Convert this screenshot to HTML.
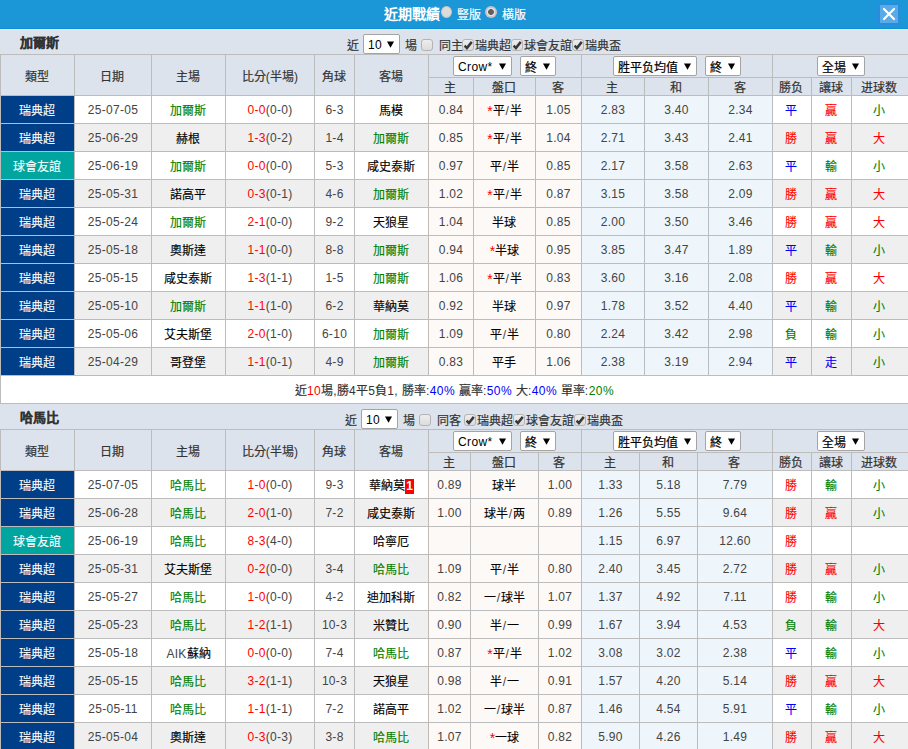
<!DOCTYPE html>
<html lang="zh-TW"><head><meta charset="utf-8"><style>
html,body{margin:0;padding:0;}
body{width:908px;height:749px;overflow:hidden;position:relative;background:#fff;font-family:"Liberation Sans", sans-serif;font-size:12px;color:#333;}
body>div,body>svg{position:absolute;}
.st{position:absolute;left:4px;top:1px;line-height:19px;white-space:pre;letter-spacing:.4px}
.st i{letter-spacing:0;position:relative;top:1px}
b{font-weight:normal;}
.t{position:absolute;left:0;right:0;top:0;bottom:0;display:flex;align-items:center;justify-content:center;white-space:pre;letter-spacing:.3px}
.s{position:absolute;left:0;right:0;top:0;bottom:0;display:flex;align-items:center;justify-content:center;white-space:pre;}
i{font-style:normal;letter-spacing:0;-webkit-text-stroke:.2px}
.bd i{color:#000;-webkit-text-stroke:.12px}
.bd span[style] i{color:inherit}
.w i{-webkit-text-stroke:.1px}
.t i{position:relative;top:0}
.cj i{left:-1px}
s{text-decoration:none;padding:0 .6px}
u{text-decoration:none;font-size:14px;line-height:10px;position:relative;top:1px}
.sum{letter-spacing:.45px}
.rc{background:#f00;color:#fff;font-weight:bold;padding:0 1px 1px;letter-spacing:0}
</style></head><body>
<div style="left:0px;top:0px;width:908px;height:28px;background:#1b96d6"></div><div style="left:0px;top:28px;width:908px;height:1px;background:#0b8ed2"></div><div style="left:0px;top:29px;width:908px;height:1px;background:#e7e9ee"></div><div style="left:384px;top:5px;width:60px;height:18px;color:#fff;font-weight:bold;font-size:14px;line-height:18px;white-space:nowrap;-webkit-text-stroke:0"><i style="-webkit-text-stroke:0">近期戰績</i></div><div style="left:441px;top:6px;width:11px;height:12px;border-radius:50%;background:#dcdcdc;box-sizing:border-box;border:1px solid #c4c4c4"></div><div style="left:457px;top:7px;width:30px;height:16px;color:#fff;font-size:12px;line-height:16px;white-space:nowrap"><i>豎版</i></div><div style="left:485px;top:6px;width:12px;height:12px;border-radius:50%;background:radial-gradient(circle at 50% 50%, #606060 0, #606060 2.6px, #e4e4e4 3.2px, #e4e4e4 4px, #c4c4c4 4.6px);box-sizing:border-box"></div><div style="left:502px;top:7px;width:30px;height:16px;color:#fff;font-size:12px;line-height:16px;white-space:nowrap"><i>横版</i></div><div style="left:878px;top:3px;width:22px;height:22px;background:#5aaae8;border:2px solid #2a8be0;box-sizing:border-box"></div><svg style="position:absolute;left:878px;top:3px" width="22" height="22"><path d="M6 6 L16 16 M16 6 L6 16" stroke="#fff" stroke-width="2.2" stroke-linecap="round"/></svg><div style="left:0px;top:30px;width:908px;height:24px;background:#dce3ec"></div><div style="left:20px;top:34px;width:80px;height:18px;font-weight:bold;font-size:13px;line-height:18px;color:#333;white-space:nowrap"><i>加爾斯</i></div><div style="left:347px;top:38px;width:80px;height:16px;font-size:12px;line-height:16px;color:#333;white-space:nowrap;"><i>近</i></div><div style="left:363px;top:34px;width:37px;height:20px;background:#fff;border:1px solid #a4a4a4;border-radius:2px;box-sizing:border-box;color:#000"><b class="st">10</b><svg style="position:absolute;left:23px;top:6px" width="9" height="8"><path d="M0 0.5 L7 0.5 L3.5 6.8 Z" fill="#000"/></svg></div><div style="left:405px;top:38px;width:80px;height:16px;font-size:12px;line-height:16px;color:#333;white-space:nowrap;"><i>場</i></div><div style="left:421px;top:39px;width:12px;height:12px;box-sizing:border-box;border:1px solid #b4b4b4;border-radius:3px;background:linear-gradient(#ededed,#dcdcdc);"></div><div style="left:439px;top:38px;width:80px;height:16px;font-size:12px;line-height:16px;color:#333;white-space:nowrap;"><i>同主</i></div><div style="left:462px;top:39px;width:12px;height:12px;box-sizing:border-box;border:1px solid #b4b4b4;border-radius:3px;background:linear-gradient(#ededed,#dcdcdc);"><svg style="position:absolute;left:0;top:0" width="12" height="12"><path d="M1.6 5.6 L3.9 8 L8.8 1.9" fill="none" stroke="#383838" stroke-width="2.5"/></svg></div><div style="left:475px;top:38px;width:80px;height:16px;font-size:12px;line-height:16px;color:#333;white-space:nowrap;"><i>瑞典超</i></div><div style="left:511px;top:39px;width:12px;height:12px;box-sizing:border-box;border:1px solid #b4b4b4;border-radius:3px;background:linear-gradient(#ededed,#dcdcdc);"><svg style="position:absolute;left:0;top:0" width="12" height="12"><path d="M1.6 5.6 L3.9 8 L8.8 1.9" fill="none" stroke="#383838" stroke-width="2.5"/></svg></div><div style="left:524px;top:38px;width:80px;height:16px;font-size:12px;line-height:16px;color:#333;white-space:nowrap;"><i>球會友誼</i></div><div style="left:572px;top:39px;width:12px;height:12px;box-sizing:border-box;border:1px solid #b4b4b4;border-radius:3px;background:linear-gradient(#ededed,#dcdcdc);"><svg style="position:absolute;left:0;top:0" width="12" height="12"><path d="M1.6 5.6 L3.9 8 L8.8 1.9" fill="none" stroke="#383838" stroke-width="2.5"/></svg></div><div style="left:585px;top:38px;width:80px;height:16px;font-size:12px;line-height:16px;color:#333;white-space:nowrap;"><i>瑞典盃</i></div><div style="left:0px;top:54px;width:908px;height:41px;background:#dce3ec"></div><div style="left:1px;top:55px;width:73px;height:40px;color:#333"><b class="t h cj"><span><i>類型</i></span></b></div><div style="left:75px;top:55px;width:76px;height:40px;color:#333"><b class="t h cj"><span><i>日期</i></span></b></div><div style="left:152px;top:55px;width:73px;height:40px;color:#333"><b class="t h cj"><span><i>主場</i></span></b></div><div style="left:226px;top:55px;width:88px;height:40px;color:#333"><b class="t h"><span><i>比分</i>(<i>半場</i>)</span></b></div><div style="left:315px;top:55px;width:39px;height:40px;color:#333"><b class="t h cj"><span><i>角球</i></span></b></div><div style="left:355px;top:55px;width:73px;height:40px;color:#333"><b class="t h cj"><span><i>客場</i></span></b></div><div style="left:453px;top:56px;width:59px;height:20px;background:#fff;border:1px solid #a4a4a4;border-radius:2px;box-sizing:border-box;color:#000"><b class="st">Crow*</b><svg style="position:absolute;left:45px;top:6px" width="9" height="8"><path d="M0 0.5 L7 0.5 L3.5 6.8 Z" fill="#000"/></svg></div><div style="left:520px;top:56px;width:36px;height:20px;background:#fff;border:1px solid #a4a4a4;border-radius:2px;box-sizing:border-box;color:#000"><b class="st"><i>終</i></b><svg style="position:absolute;left:22px;top:6px" width="9" height="8"><path d="M0 0.5 L7 0.5 L3.5 6.8 Z" fill="#000"/></svg></div><div style="left:613px;top:56px;width:84px;height:20px;background:#fff;border:1px solid #a4a4a4;border-radius:2px;box-sizing:border-box;color:#000"><b class="st"><i>胜平负均值</i></b><svg style="position:absolute;left:70px;top:6px" width="9" height="8"><path d="M0 0.5 L7 0.5 L3.5 6.8 Z" fill="#000"/></svg></div><div style="left:705px;top:56px;width:36px;height:20px;background:#fff;border:1px solid #a4a4a4;border-radius:2px;box-sizing:border-box;color:#000"><b class="st"><i>終</i></b><svg style="position:absolute;left:22px;top:6px" width="9" height="8"><path d="M0 0.5 L7 0.5 L3.5 6.8 Z" fill="#000"/></svg></div><div style="left:817px;top:56px;width:48px;height:20px;background:#fff;border:1px solid #a4a4a4;border-radius:2px;box-sizing:border-box;color:#000"><b class="st"><i>全場</i></b><svg style="position:absolute;left:34px;top:6px" width="9" height="8"><path d="M0 0.5 L7 0.5 L3.5 6.8 Z" fill="#000"/></svg></div><div style="left:429px;top:78px;width:44px;height:17px;color:#333"><b class="t h2 cj"><span><i>主</i></span></b></div><div style="left:474px;top:78px;width:61px;height:17px;color:#333"><b class="t h2 cj"><span><i>盤口</i></span></b></div><div style="left:536px;top:78px;width:45px;height:17px;color:#333"><b class="t h2 cj"><span><i>客</i></span></b></div><div style="left:582px;top:78px;width:62px;height:17px;color:#333"><b class="t h2 cj"><span><i>主</i></span></b></div><div style="left:645px;top:78px;width:63px;height:17px;color:#333"><b class="t h2 cj"><span><i>和</i></span></b></div><div style="left:709px;top:78px;width:63px;height:17px;color:#333"><b class="t h2 cj"><span><i>客</i></span></b></div><div style="left:773px;top:78px;width:38px;height:17px;color:#333"><b class="t h2 cj"><span><i>勝负</i></span></b></div><div style="left:812px;top:78px;width:39px;height:17px;color:#333"><b class="t h2 cj"><span><i>讓球</i></span></b></div><div style="left:852px;top:78px;width:56px;height:17px;color:#333"><b class="t h2 cj"><span><i>进球数</i></span></b></div><div style="left:1px;top:96px;width:73px;height:27px;background:#003f88;color:#fff"><b class="t w cj"><span><i>瑞典超</i></span></b></div><div style="left:75px;top:96px;width:76px;height:27px;background:#fff;color:#444"><b class="t bd"><span>25-07-05</span></b></div><div style="left:152px;top:96px;width:73px;height:27px;background:#fff;color:#444"><b class="t bd cj"><span><span style="color:#008000"><i>加爾斯</i></span></span></b></div><div style="left:226px;top:96px;width:88px;height:27px;background:#fff;color:#444"><b class="t bd"><span><span style="color:#f00">0-0</span>(0-0)</span></b></div><div style="left:315px;top:96px;width:39px;height:27px;background:#fff;color:#444"><b class="t bd"><span>6-3</span></b></div><div style="left:355px;top:96px;width:73px;height:27px;background:#fff;color:#444"><b class="t bd cj"><span><i>馬模</i></span></b></div><div style="left:429px;top:96px;width:44px;height:27px;background:#fdf9f6;color:#444"><b class="t bd"><span>0.84</span></b></div><div style="left:474px;top:96px;width:61px;height:27px;background:#fdf9f6;color:#444"><b class="t bd"><span><span style="color:#f00"><u>*</u></span><i>平</i><s>/</s><i>半</i></span></b></div><div style="left:536px;top:96px;width:45px;height:27px;background:#fdf9f6;color:#444"><b class="t bd"><span>1.05</span></b></div><div style="left:582px;top:96px;width:62px;height:27px;background:#eff6fb;color:#444"><b class="t bd"><span>2.83</span></b></div><div style="left:645px;top:96px;width:63px;height:27px;background:#eff6fb;color:#444"><b class="t bd"><span>3.40</span></b></div><div style="left:709px;top:96px;width:63px;height:27px;background:#eff6fb;color:#444"><b class="t bd"><span>2.34</span></b></div><div style="left:773px;top:96px;width:38px;height:27px;background:#fff;color:#444"><b class="t bd cj"><span><span style="color:#00f"><i>平</i></span></span></b></div><div style="left:812px;top:96px;width:39px;height:27px;background:#fff;color:#444"><b class="t bd cj"><span><span style="color:#f00"><i>贏</i></span></span></b></div><div style="left:852px;top:96px;width:56px;height:27px;background:#fff;color:#444"><b class="t bd cj"><span><span style="color:#008000"><i>小</i></span></span></b></div><div style="left:0px;top:123px;width:908px;height:1px;background:#bcbcbc"></div><div style="left:1px;top:124px;width:73px;height:27px;background:#003f88;color:#fff"><b class="t w cj"><span><i>瑞典超</i></span></b></div><div style="left:75px;top:124px;width:76px;height:27px;background:#efefef;color:#444"><b class="t bd"><span>25-06-29</span></b></div><div style="left:152px;top:124px;width:73px;height:27px;background:#efefef;color:#444"><b class="t bd cj"><span><i>赫根</i></span></b></div><div style="left:226px;top:124px;width:88px;height:27px;background:#efefef;color:#444"><b class="t bd"><span><span style="color:#f00">1-3</span>(0-2)</span></b></div><div style="left:315px;top:124px;width:39px;height:27px;background:#efefef;color:#444"><b class="t bd"><span>1-4</span></b></div><div style="left:355px;top:124px;width:73px;height:27px;background:#efefef;color:#444"><b class="t bd cj"><span><span style="color:#008000"><i>加爾斯</i></span></span></b></div><div style="left:429px;top:124px;width:44px;height:27px;background:#fdf9f6;color:#444"><b class="t bd"><span>0.85</span></b></div><div style="left:474px;top:124px;width:61px;height:27px;background:#fdf9f6;color:#444"><b class="t bd"><span><span style="color:#f00"><u>*</u></span><i>平</i><s>/</s><i>半</i></span></b></div><div style="left:536px;top:124px;width:45px;height:27px;background:#fdf9f6;color:#444"><b class="t bd"><span>1.04</span></b></div><div style="left:582px;top:124px;width:62px;height:27px;background:#eff6fb;color:#444"><b class="t bd"><span>2.71</span></b></div><div style="left:645px;top:124px;width:63px;height:27px;background:#eff6fb;color:#444"><b class="t bd"><span>3.43</span></b></div><div style="left:709px;top:124px;width:63px;height:27px;background:#eff6fb;color:#444"><b class="t bd"><span>2.41</span></b></div><div style="left:773px;top:124px;width:38px;height:27px;background:#efefef;color:#444"><b class="t bd cj"><span><span style="color:#f00"><i>勝</i></span></span></b></div><div style="left:812px;top:124px;width:39px;height:27px;background:#efefef;color:#444"><b class="t bd cj"><span><span style="color:#f00"><i>贏</i></span></span></b></div><div style="left:852px;top:124px;width:56px;height:27px;background:#efefef;color:#444"><b class="t bd cj"><span><span style="color:#f00"><i>大</i></span></span></b></div><div style="left:0px;top:151px;width:908px;height:1px;background:#bcbcbc"></div><div style="left:1px;top:152px;width:73px;height:27px;background:#00a59f;color:#fff"><b class="t w cj"><span><i>球會友誼</i></span></b></div><div style="left:75px;top:152px;width:76px;height:27px;background:#fff;color:#444"><b class="t bd"><span>25-06-19</span></b></div><div style="left:152px;top:152px;width:73px;height:27px;background:#fff;color:#444"><b class="t bd cj"><span><span style="color:#008000"><i>加爾斯</i></span></span></b></div><div style="left:226px;top:152px;width:88px;height:27px;background:#fff;color:#444"><b class="t bd"><span><span style="color:#f00">0-0</span>(0-0)</span></b></div><div style="left:315px;top:152px;width:39px;height:27px;background:#fff;color:#444"><b class="t bd"><span>5-3</span></b></div><div style="left:355px;top:152px;width:73px;height:27px;background:#fff;color:#444"><b class="t bd cj"><span><i>咸史泰斯</i></span></b></div><div style="left:429px;top:152px;width:44px;height:27px;background:#fdf9f6;color:#444"><b class="t bd"><span>0.97</span></b></div><div style="left:474px;top:152px;width:61px;height:27px;background:#fdf9f6;color:#444"><b class="t bd"><span><i>平</i><s>/</s><i>半</i></span></b></div><div style="left:536px;top:152px;width:45px;height:27px;background:#fdf9f6;color:#444"><b class="t bd"><span>0.85</span></b></div><div style="left:582px;top:152px;width:62px;height:27px;background:#eff6fb;color:#444"><b class="t bd"><span>2.17</span></b></div><div style="left:645px;top:152px;width:63px;height:27px;background:#eff6fb;color:#444"><b class="t bd"><span>3.58</span></b></div><div style="left:709px;top:152px;width:63px;height:27px;background:#eff6fb;color:#444"><b class="t bd"><span>2.63</span></b></div><div style="left:773px;top:152px;width:38px;height:27px;background:#fff;color:#444"><b class="t bd cj"><span><span style="color:#00f"><i>平</i></span></span></b></div><div style="left:812px;top:152px;width:39px;height:27px;background:#fff;color:#444"><b class="t bd cj"><span><span style="color:#008000"><i>輸</i></span></span></b></div><div style="left:852px;top:152px;width:56px;height:27px;background:#fff;color:#444"><b class="t bd cj"><span><span style="color:#008000"><i>小</i></span></span></b></div><div style="left:0px;top:179px;width:908px;height:1px;background:#bcbcbc"></div><div style="left:1px;top:180px;width:73px;height:27px;background:#003f88;color:#fff"><b class="t w cj"><span><i>瑞典超</i></span></b></div><div style="left:75px;top:180px;width:76px;height:27px;background:#efefef;color:#444"><b class="t bd"><span>25-05-31</span></b></div><div style="left:152px;top:180px;width:73px;height:27px;background:#efefef;color:#444"><b class="t bd cj"><span><i>諾高平</i></span></b></div><div style="left:226px;top:180px;width:88px;height:27px;background:#efefef;color:#444"><b class="t bd"><span><span style="color:#f00">0-3</span>(0-1)</span></b></div><div style="left:315px;top:180px;width:39px;height:27px;background:#efefef;color:#444"><b class="t bd"><span>4-6</span></b></div><div style="left:355px;top:180px;width:73px;height:27px;background:#efefef;color:#444"><b class="t bd cj"><span><span style="color:#008000"><i>加爾斯</i></span></span></b></div><div style="left:429px;top:180px;width:44px;height:27px;background:#fdf9f6;color:#444"><b class="t bd"><span>1.02</span></b></div><div style="left:474px;top:180px;width:61px;height:27px;background:#fdf9f6;color:#444"><b class="t bd"><span><span style="color:#f00"><u>*</u></span><i>平</i><s>/</s><i>半</i></span></b></div><div style="left:536px;top:180px;width:45px;height:27px;background:#fdf9f6;color:#444"><b class="t bd"><span>0.87</span></b></div><div style="left:582px;top:180px;width:62px;height:27px;background:#eff6fb;color:#444"><b class="t bd"><span>3.15</span></b></div><div style="left:645px;top:180px;width:63px;height:27px;background:#eff6fb;color:#444"><b class="t bd"><span>3.58</span></b></div><div style="left:709px;top:180px;width:63px;height:27px;background:#eff6fb;color:#444"><b class="t bd"><span>2.09</span></b></div><div style="left:773px;top:180px;width:38px;height:27px;background:#efefef;color:#444"><b class="t bd cj"><span><span style="color:#f00"><i>勝</i></span></span></b></div><div style="left:812px;top:180px;width:39px;height:27px;background:#efefef;color:#444"><b class="t bd cj"><span><span style="color:#f00"><i>贏</i></span></span></b></div><div style="left:852px;top:180px;width:56px;height:27px;background:#efefef;color:#444"><b class="t bd cj"><span><span style="color:#f00"><i>大</i></span></span></b></div><div style="left:0px;top:207px;width:908px;height:1px;background:#bcbcbc"></div><div style="left:1px;top:208px;width:73px;height:27px;background:#003f88;color:#fff"><b class="t w cj"><span><i>瑞典超</i></span></b></div><div style="left:75px;top:208px;width:76px;height:27px;background:#fff;color:#444"><b class="t bd"><span>25-05-24</span></b></div><div style="left:152px;top:208px;width:73px;height:27px;background:#fff;color:#444"><b class="t bd cj"><span><span style="color:#008000"><i>加爾斯</i></span></span></b></div><div style="left:226px;top:208px;width:88px;height:27px;background:#fff;color:#444"><b class="t bd"><span><span style="color:#f00">2-1</span>(0-0)</span></b></div><div style="left:315px;top:208px;width:39px;height:27px;background:#fff;color:#444"><b class="t bd"><span>9-2</span></b></div><div style="left:355px;top:208px;width:73px;height:27px;background:#fff;color:#444"><b class="t bd cj"><span><i>天狼星</i></span></b></div><div style="left:429px;top:208px;width:44px;height:27px;background:#fdf9f6;color:#444"><b class="t bd"><span>1.04</span></b></div><div style="left:474px;top:208px;width:61px;height:27px;background:#fdf9f6;color:#444"><b class="t bd cj"><span><i>半球</i></span></b></div><div style="left:536px;top:208px;width:45px;height:27px;background:#fdf9f6;color:#444"><b class="t bd"><span>0.85</span></b></div><div style="left:582px;top:208px;width:62px;height:27px;background:#eff6fb;color:#444"><b class="t bd"><span>2.00</span></b></div><div style="left:645px;top:208px;width:63px;height:27px;background:#eff6fb;color:#444"><b class="t bd"><span>3.50</span></b></div><div style="left:709px;top:208px;width:63px;height:27px;background:#eff6fb;color:#444"><b class="t bd"><span>3.46</span></b></div><div style="left:773px;top:208px;width:38px;height:27px;background:#fff;color:#444"><b class="t bd cj"><span><span style="color:#f00"><i>勝</i></span></span></b></div><div style="left:812px;top:208px;width:39px;height:27px;background:#fff;color:#444"><b class="t bd cj"><span><span style="color:#f00"><i>贏</i></span></span></b></div><div style="left:852px;top:208px;width:56px;height:27px;background:#fff;color:#444"><b class="t bd cj"><span><span style="color:#f00"><i>大</i></span></span></b></div><div style="left:0px;top:235px;width:908px;height:1px;background:#bcbcbc"></div><div style="left:1px;top:236px;width:73px;height:27px;background:#003f88;color:#fff"><b class="t w cj"><span><i>瑞典超</i></span></b></div><div style="left:75px;top:236px;width:76px;height:27px;background:#efefef;color:#444"><b class="t bd"><span>25-05-18</span></b></div><div style="left:152px;top:236px;width:73px;height:27px;background:#efefef;color:#444"><b class="t bd cj"><span><i>奧斯達</i></span></b></div><div style="left:226px;top:236px;width:88px;height:27px;background:#efefef;color:#444"><b class="t bd"><span><span style="color:#f00">1-1</span>(0-0)</span></b></div><div style="left:315px;top:236px;width:39px;height:27px;background:#efefef;color:#444"><b class="t bd"><span>8-8</span></b></div><div style="left:355px;top:236px;width:73px;height:27px;background:#efefef;color:#444"><b class="t bd cj"><span><span style="color:#008000"><i>加爾斯</i></span></span></b></div><div style="left:429px;top:236px;width:44px;height:27px;background:#fdf9f6;color:#444"><b class="t bd"><span>0.94</span></b></div><div style="left:474px;top:236px;width:61px;height:27px;background:#fdf9f6;color:#444"><b class="t bd"><span><span style="color:#f00"><u>*</u></span><i>半球</i></span></b></div><div style="left:536px;top:236px;width:45px;height:27px;background:#fdf9f6;color:#444"><b class="t bd"><span>0.95</span></b></div><div style="left:582px;top:236px;width:62px;height:27px;background:#eff6fb;color:#444"><b class="t bd"><span>3.85</span></b></div><div style="left:645px;top:236px;width:63px;height:27px;background:#eff6fb;color:#444"><b class="t bd"><span>3.47</span></b></div><div style="left:709px;top:236px;width:63px;height:27px;background:#eff6fb;color:#444"><b class="t bd"><span>1.89</span></b></div><div style="left:773px;top:236px;width:38px;height:27px;background:#efefef;color:#444"><b class="t bd cj"><span><span style="color:#00f"><i>平</i></span></span></b></div><div style="left:812px;top:236px;width:39px;height:27px;background:#efefef;color:#444"><b class="t bd cj"><span><span style="color:#008000"><i>輸</i></span></span></b></div><div style="left:852px;top:236px;width:56px;height:27px;background:#efefef;color:#444"><b class="t bd cj"><span><span style="color:#008000"><i>小</i></span></span></b></div><div style="left:0px;top:263px;width:908px;height:1px;background:#bcbcbc"></div><div style="left:1px;top:264px;width:73px;height:27px;background:#003f88;color:#fff"><b class="t w cj"><span><i>瑞典超</i></span></b></div><div style="left:75px;top:264px;width:76px;height:27px;background:#fff;color:#444"><b class="t bd"><span>25-05-15</span></b></div><div style="left:152px;top:264px;width:73px;height:27px;background:#fff;color:#444"><b class="t bd cj"><span><i>咸史泰斯</i></span></b></div><div style="left:226px;top:264px;width:88px;height:27px;background:#fff;color:#444"><b class="t bd"><span><span style="color:#f00">1-3</span>(1-1)</span></b></div><div style="left:315px;top:264px;width:39px;height:27px;background:#fff;color:#444"><b class="t bd"><span>1-5</span></b></div><div style="left:355px;top:264px;width:73px;height:27px;background:#fff;color:#444"><b class="t bd cj"><span><span style="color:#008000"><i>加爾斯</i></span></span></b></div><div style="left:429px;top:264px;width:44px;height:27px;background:#fdf9f6;color:#444"><b class="t bd"><span>1.06</span></b></div><div style="left:474px;top:264px;width:61px;height:27px;background:#fdf9f6;color:#444"><b class="t bd"><span><span style="color:#f00"><u>*</u></span><i>平</i><s>/</s><i>半</i></span></b></div><div style="left:536px;top:264px;width:45px;height:27px;background:#fdf9f6;color:#444"><b class="t bd"><span>0.83</span></b></div><div style="left:582px;top:264px;width:62px;height:27px;background:#eff6fb;color:#444"><b class="t bd"><span>3.60</span></b></div><div style="left:645px;top:264px;width:63px;height:27px;background:#eff6fb;color:#444"><b class="t bd"><span>3.16</span></b></div><div style="left:709px;top:264px;width:63px;height:27px;background:#eff6fb;color:#444"><b class="t bd"><span>2.08</span></b></div><div style="left:773px;top:264px;width:38px;height:27px;background:#fff;color:#444"><b class="t bd cj"><span><span style="color:#f00"><i>勝</i></span></span></b></div><div style="left:812px;top:264px;width:39px;height:27px;background:#fff;color:#444"><b class="t bd cj"><span><span style="color:#f00"><i>贏</i></span></span></b></div><div style="left:852px;top:264px;width:56px;height:27px;background:#fff;color:#444"><b class="t bd cj"><span><span style="color:#f00"><i>大</i></span></span></b></div><div style="left:0px;top:291px;width:908px;height:1px;background:#bcbcbc"></div><div style="left:1px;top:292px;width:73px;height:27px;background:#003f88;color:#fff"><b class="t w cj"><span><i>瑞典超</i></span></b></div><div style="left:75px;top:292px;width:76px;height:27px;background:#efefef;color:#444"><b class="t bd"><span>25-05-10</span></b></div><div style="left:152px;top:292px;width:73px;height:27px;background:#efefef;color:#444"><b class="t bd cj"><span><span style="color:#008000"><i>加爾斯</i></span></span></b></div><div style="left:226px;top:292px;width:88px;height:27px;background:#efefef;color:#444"><b class="t bd"><span><span style="color:#f00">1-1</span>(1-0)</span></b></div><div style="left:315px;top:292px;width:39px;height:27px;background:#efefef;color:#444"><b class="t bd"><span>6-2</span></b></div><div style="left:355px;top:292px;width:73px;height:27px;background:#efefef;color:#444"><b class="t bd cj"><span><i>華納莫</i></span></b></div><div style="left:429px;top:292px;width:44px;height:27px;background:#fdf9f6;color:#444"><b class="t bd"><span>0.92</span></b></div><div style="left:474px;top:292px;width:61px;height:27px;background:#fdf9f6;color:#444"><b class="t bd cj"><span><i>半球</i></span></b></div><div style="left:536px;top:292px;width:45px;height:27px;background:#fdf9f6;color:#444"><b class="t bd"><span>0.97</span></b></div><div style="left:582px;top:292px;width:62px;height:27px;background:#eff6fb;color:#444"><b class="t bd"><span>1.78</span></b></div><div style="left:645px;top:292px;width:63px;height:27px;background:#eff6fb;color:#444"><b class="t bd"><span>3.52</span></b></div><div style="left:709px;top:292px;width:63px;height:27px;background:#eff6fb;color:#444"><b class="t bd"><span>4.40</span></b></div><div style="left:773px;top:292px;width:38px;height:27px;background:#efefef;color:#444"><b class="t bd cj"><span><span style="color:#00f"><i>平</i></span></span></b></div><div style="left:812px;top:292px;width:39px;height:27px;background:#efefef;color:#444"><b class="t bd cj"><span><span style="color:#008000"><i>輸</i></span></span></b></div><div style="left:852px;top:292px;width:56px;height:27px;background:#efefef;color:#444"><b class="t bd cj"><span><span style="color:#008000"><i>小</i></span></span></b></div><div style="left:0px;top:319px;width:908px;height:1px;background:#bcbcbc"></div><div style="left:1px;top:320px;width:73px;height:27px;background:#003f88;color:#fff"><b class="t w cj"><span><i>瑞典超</i></span></b></div><div style="left:75px;top:320px;width:76px;height:27px;background:#fff;color:#444"><b class="t bd"><span>25-05-06</span></b></div><div style="left:152px;top:320px;width:73px;height:27px;background:#fff;color:#444"><b class="t bd cj"><span><i>艾夫斯堡</i></span></b></div><div style="left:226px;top:320px;width:88px;height:27px;background:#fff;color:#444"><b class="t bd"><span><span style="color:#f00">2-0</span>(1-0)</span></b></div><div style="left:315px;top:320px;width:39px;height:27px;background:#fff;color:#444"><b class="t bd"><span>6-10</span></b></div><div style="left:355px;top:320px;width:73px;height:27px;background:#fff;color:#444"><b class="t bd cj"><span><span style="color:#008000"><i>加爾斯</i></span></span></b></div><div style="left:429px;top:320px;width:44px;height:27px;background:#fdf9f6;color:#444"><b class="t bd"><span>1.09</span></b></div><div style="left:474px;top:320px;width:61px;height:27px;background:#fdf9f6;color:#444"><b class="t bd"><span><i>平</i><s>/</s><i>半</i></span></b></div><div style="left:536px;top:320px;width:45px;height:27px;background:#fdf9f6;color:#444"><b class="t bd"><span>0.80</span></b></div><div style="left:582px;top:320px;width:62px;height:27px;background:#eff6fb;color:#444"><b class="t bd"><span>2.24</span></b></div><div style="left:645px;top:320px;width:63px;height:27px;background:#eff6fb;color:#444"><b class="t bd"><span>3.42</span></b></div><div style="left:709px;top:320px;width:63px;height:27px;background:#eff6fb;color:#444"><b class="t bd"><span>2.98</span></b></div><div style="left:773px;top:320px;width:38px;height:27px;background:#fff;color:#444"><b class="t bd cj"><span><span style="color:#008000"><i>負</i></span></span></b></div><div style="left:812px;top:320px;width:39px;height:27px;background:#fff;color:#444"><b class="t bd cj"><span><span style="color:#008000"><i>輸</i></span></span></b></div><div style="left:852px;top:320px;width:56px;height:27px;background:#fff;color:#444"><b class="t bd cj"><span><span style="color:#008000"><i>小</i></span></span></b></div><div style="left:0px;top:347px;width:908px;height:1px;background:#bcbcbc"></div><div style="left:1px;top:348px;width:73px;height:27px;background:#003f88;color:#fff"><b class="t w cj"><span><i>瑞典超</i></span></b></div><div style="left:75px;top:348px;width:76px;height:27px;background:#efefef;color:#444"><b class="t bd"><span>25-04-29</span></b></div><div style="left:152px;top:348px;width:73px;height:27px;background:#efefef;color:#444"><b class="t bd cj"><span><i>哥登堡</i></span></b></div><div style="left:226px;top:348px;width:88px;height:27px;background:#efefef;color:#444"><b class="t bd"><span><span style="color:#f00">1-1</span>(0-1)</span></b></div><div style="left:315px;top:348px;width:39px;height:27px;background:#efefef;color:#444"><b class="t bd"><span>4-9</span></b></div><div style="left:355px;top:348px;width:73px;height:27px;background:#efefef;color:#444"><b class="t bd cj"><span><span style="color:#008000"><i>加爾斯</i></span></span></b></div><div style="left:429px;top:348px;width:44px;height:27px;background:#fdf9f6;color:#444"><b class="t bd"><span>0.83</span></b></div><div style="left:474px;top:348px;width:61px;height:27px;background:#fdf9f6;color:#444"><b class="t bd cj"><span><i>平手</i></span></b></div><div style="left:536px;top:348px;width:45px;height:27px;background:#fdf9f6;color:#444"><b class="t bd"><span>1.06</span></b></div><div style="left:582px;top:348px;width:62px;height:27px;background:#eff6fb;color:#444"><b class="t bd"><span>2.38</span></b></div><div style="left:645px;top:348px;width:63px;height:27px;background:#eff6fb;color:#444"><b class="t bd"><span>3.19</span></b></div><div style="left:709px;top:348px;width:63px;height:27px;background:#eff6fb;color:#444"><b class="t bd"><span>2.94</span></b></div><div style="left:773px;top:348px;width:38px;height:27px;background:#efefef;color:#444"><b class="t bd cj"><span><span style="color:#00f"><i>平</i></span></span></b></div><div style="left:812px;top:348px;width:39px;height:27px;background:#efefef;color:#444"><b class="t bd cj"><span><span style="color:#00f"><i>走</i></span></span></b></div><div style="left:852px;top:348px;width:56px;height:27px;background:#efefef;color:#444"><b class="t bd cj"><span><span style="color:#008000"><i>小</i></span></span></b></div><div style="left:0px;top:375px;width:908px;height:1px;background:#bcbcbc"></div><div style="left:0px;top:54px;width:908px;height:1px;background:#bcbcbc"></div><div style="left:428px;top:77px;width:480px;height:1px;background:#bcbcbc"></div><div style="left:0px;top:95px;width:908px;height:1px;background:#bcbcbc"></div><div style="left:0px;top:54px;width:1px;height:321px;background:#bcbcbc"></div><div style="left:74px;top:54px;width:1px;height:321px;background:#bcbcbc"></div><div style="left:151px;top:54px;width:1px;height:321px;background:#bcbcbc"></div><div style="left:225px;top:54px;width:1px;height:321px;background:#bcbcbc"></div><div style="left:314px;top:54px;width:1px;height:321px;background:#bcbcbc"></div><div style="left:354px;top:54px;width:1px;height:321px;background:#bcbcbc"></div><div style="left:428px;top:54px;width:1px;height:321px;background:#bcbcbc"></div><div style="left:473px;top:77px;width:1px;height:298px;background:#bcbcbc"></div><div style="left:535px;top:77px;width:1px;height:298px;background:#bcbcbc"></div><div style="left:581px;top:54px;width:1px;height:321px;background:#bcbcbc"></div><div style="left:644px;top:77px;width:1px;height:298px;background:#bcbcbc"></div><div style="left:708px;top:77px;width:1px;height:298px;background:#bcbcbc"></div><div style="left:772px;top:54px;width:1px;height:321px;background:#bcbcbc"></div><div style="left:811px;top:77px;width:1px;height:298px;background:#bcbcbc"></div><div style="left:851px;top:77px;width:1px;height:298px;background:#bcbcbc"></div><div style="left:1px;top:376px;width:907px;height:27px;background:#fff;color:#333;white-space:pre"><b class="t sum"><span><i>近</i><span style="color:#f00">10</span><i>場</i>,<i>勝</i>4<i>平</i>5<i>負</i>1, <i>勝率</i>:<span style="color:#00f">40%</span> <i>贏率</i>:<span style="color:#00f">50%</span> <i>大</i>:<span style="color:#00f">40%</span> <i>單率</i>:<span style="color:#008000">20%</span></span></b></div><div style="left:0px;top:376px;width:1px;height:27px;background:#bcbcbc"></div><div style="left:0px;top:403px;width:908px;height:1px;background:#bcbcbc"></div><div style="left:0px;top:404px;width:908px;height:25px;background:#dce3ec"></div><div style="left:20px;top:409px;width:80px;height:18px;font-weight:bold;font-size:13px;line-height:18px;color:#333;white-space:nowrap"><i>哈馬比</i></div><div style="left:345px;top:413px;width:80px;height:16px;font-size:12px;line-height:16px;color:#333;white-space:nowrap;"><i>近</i></div><div style="left:361px;top:409px;width:37px;height:20px;background:#fff;border:1px solid #a4a4a4;border-radius:2px;box-sizing:border-box;color:#000"><b class="st">10</b><svg style="position:absolute;left:23px;top:6px" width="9" height="8"><path d="M0 0.5 L7 0.5 L3.5 6.8 Z" fill="#000"/></svg></div><div style="left:403px;top:413px;width:80px;height:16px;font-size:12px;line-height:16px;color:#333;white-space:nowrap;"><i>場</i></div><div style="left:419px;top:414px;width:12px;height:12px;box-sizing:border-box;border:1px solid #b4b4b4;border-radius:3px;background:linear-gradient(#ededed,#dcdcdc);"></div><div style="left:437px;top:413px;width:80px;height:16px;font-size:12px;line-height:16px;color:#333;white-space:nowrap;"><i>同客</i> </div><div style="left:464px;top:414px;width:12px;height:12px;box-sizing:border-box;border:1px solid #b4b4b4;border-radius:3px;background:linear-gradient(#ededed,#dcdcdc);"><svg style="position:absolute;left:0;top:0" width="12" height="12"><path d="M1.6 5.6 L3.9 8 L8.8 1.9" fill="none" stroke="#383838" stroke-width="2.5"/></svg></div><div style="left:477px;top:413px;width:80px;height:16px;font-size:12px;line-height:16px;color:#333;white-space:nowrap;"><i>瑞典超</i></div><div style="left:513px;top:414px;width:12px;height:12px;box-sizing:border-box;border:1px solid #b4b4b4;border-radius:3px;background:linear-gradient(#ededed,#dcdcdc);"><svg style="position:absolute;left:0;top:0" width="12" height="12"><path d="M1.6 5.6 L3.9 8 L8.8 1.9" fill="none" stroke="#383838" stroke-width="2.5"/></svg></div><div style="left:526px;top:413px;width:80px;height:16px;font-size:12px;line-height:16px;color:#333;white-space:nowrap;"><i>球會友誼</i></div><div style="left:574px;top:414px;width:12px;height:12px;box-sizing:border-box;border:1px solid #b4b4b4;border-radius:3px;background:linear-gradient(#ededed,#dcdcdc);"><svg style="position:absolute;left:0;top:0" width="12" height="12"><path d="M1.6 5.6 L3.9 8 L8.8 1.9" fill="none" stroke="#383838" stroke-width="2.5"/></svg></div><div style="left:587px;top:413px;width:80px;height:16px;font-size:12px;line-height:16px;color:#333;white-space:nowrap;"><i>瑞典盃</i></div><div style="left:0px;top:429px;width:908px;height:41px;background:#dce3ec"></div><div style="left:1px;top:430px;width:73px;height:40px;color:#333"><b class="t h cj"><span><i>類型</i></span></b></div><div style="left:75px;top:430px;width:76px;height:40px;color:#333"><b class="t h cj"><span><i>日期</i></span></b></div><div style="left:152px;top:430px;width:73px;height:40px;color:#333"><b class="t h cj"><span><i>主場</i></span></b></div><div style="left:226px;top:430px;width:88px;height:40px;color:#333"><b class="t h"><span><i>比分</i>(<i>半場</i>)</span></b></div><div style="left:315px;top:430px;width:39px;height:40px;color:#333"><b class="t h cj"><span><i>角球</i></span></b></div><div style="left:355px;top:430px;width:73px;height:40px;color:#333"><b class="t h cj"><span><i>客場</i></span></b></div><div style="left:453px;top:431px;width:59px;height:20px;background:#fff;border:1px solid #a4a4a4;border-radius:2px;box-sizing:border-box;color:#000"><b class="st">Crow*</b><svg style="position:absolute;left:45px;top:6px" width="9" height="8"><path d="M0 0.5 L7 0.5 L3.5 6.8 Z" fill="#000"/></svg></div><div style="left:520px;top:431px;width:36px;height:20px;background:#fff;border:1px solid #a4a4a4;border-radius:2px;box-sizing:border-box;color:#000"><b class="st"><i>終</i></b><svg style="position:absolute;left:22px;top:6px" width="9" height="8"><path d="M0 0.5 L7 0.5 L3.5 6.8 Z" fill="#000"/></svg></div><div style="left:613px;top:431px;width:84px;height:20px;background:#fff;border:1px solid #a4a4a4;border-radius:2px;box-sizing:border-box;color:#000"><b class="st"><i>胜平负均值</i></b><svg style="position:absolute;left:70px;top:6px" width="9" height="8"><path d="M0 0.5 L7 0.5 L3.5 6.8 Z" fill="#000"/></svg></div><div style="left:705px;top:431px;width:36px;height:20px;background:#fff;border:1px solid #a4a4a4;border-radius:2px;box-sizing:border-box;color:#000"><b class="st"><i>終</i></b><svg style="position:absolute;left:22px;top:6px" width="9" height="8"><path d="M0 0.5 L7 0.5 L3.5 6.8 Z" fill="#000"/></svg></div><div style="left:817px;top:431px;width:48px;height:20px;background:#fff;border:1px solid #a4a4a4;border-radius:2px;box-sizing:border-box;color:#000"><b class="st"><i>全場</i></b><svg style="position:absolute;left:34px;top:6px" width="9" height="8"><path d="M0 0.5 L7 0.5 L3.5 6.8 Z" fill="#000"/></svg></div><div style="left:429px;top:453px;width:41px;height:17px;color:#333"><b class="t h2 cj"><span><i>主</i></span></b></div><div style="left:471px;top:453px;width:67px;height:17px;color:#333"><b class="t h2 cj"><span><i>盤口</i></span></b></div><div style="left:539px;top:453px;width:42px;height:17px;color:#333"><b class="t h2 cj"><span><i>客</i></span></b></div><div style="left:582px;top:453px;width:57px;height:17px;color:#333"><b class="t h2 cj"><span><i>主</i></span></b></div><div style="left:640px;top:453px;width:57px;height:17px;color:#333"><b class="t h2 cj"><span><i>和</i></span></b></div><div style="left:698px;top:453px;width:74px;height:17px;color:#333"><b class="t h2 cj"><span><i>客</i></span></b></div><div style="left:773px;top:453px;width:38px;height:17px;color:#333"><b class="t h2 cj"><span><i>勝负</i></span></b></div><div style="left:812px;top:453px;width:39px;height:17px;color:#333"><b class="t h2 cj"><span><i>讓球</i></span></b></div><div style="left:852px;top:453px;width:56px;height:17px;color:#333"><b class="t h2 cj"><span><i>进球数</i></span></b></div><div style="left:1px;top:471px;width:73px;height:27px;background:#003f88;color:#fff"><b class="t w cj"><span><i>瑞典超</i></span></b></div><div style="left:75px;top:471px;width:76px;height:27px;background:#fff;color:#444"><b class="t bd"><span>25-07-05</span></b></div><div style="left:152px;top:471px;width:73px;height:27px;background:#fff;color:#444"><b class="t bd cj"><span><span style="color:#008000"><i>哈馬比</i></span></span></b></div><div style="left:226px;top:471px;width:88px;height:27px;background:#fff;color:#444"><b class="t bd"><span><span style="color:#f00">1-0</span>(0-0)</span></b></div><div style="left:315px;top:471px;width:39px;height:27px;background:#fff;color:#444"><b class="t bd"><span>9-3</span></b></div><div style="left:355px;top:471px;width:73px;height:27px;background:#fff;color:#444"><b class="t bd"><span><i>華納莫</i><span class="rc">1</span></span></b></div><div style="left:429px;top:471px;width:41px;height:27px;background:#fdf9f6;color:#444"><b class="t bd"><span>0.89</span></b></div><div style="left:471px;top:471px;width:67px;height:27px;background:#fdf9f6;color:#444"><b class="t bd cj"><span><i>球半</i></span></b></div><div style="left:539px;top:471px;width:42px;height:27px;background:#fdf9f6;color:#444"><b class="t bd"><span>1.00</span></b></div><div style="left:582px;top:471px;width:57px;height:27px;background:#eff6fb;color:#444"><b class="t bd"><span>1.33</span></b></div><div style="left:640px;top:471px;width:57px;height:27px;background:#eff6fb;color:#444"><b class="t bd"><span>5.18</span></b></div><div style="left:698px;top:471px;width:74px;height:27px;background:#eff6fb;color:#444"><b class="t bd"><span>7.79</span></b></div><div style="left:773px;top:471px;width:38px;height:27px;background:#fff;color:#444"><b class="t bd cj"><span><span style="color:#f00"><i>勝</i></span></span></b></div><div style="left:812px;top:471px;width:39px;height:27px;background:#fff;color:#444"><b class="t bd cj"><span><span style="color:#008000"><i>輸</i></span></span></b></div><div style="left:852px;top:471px;width:56px;height:27px;background:#fff;color:#444"><b class="t bd cj"><span><span style="color:#008000"><i>小</i></span></span></b></div><div style="left:0px;top:498px;width:908px;height:1px;background:#bcbcbc"></div><div style="left:1px;top:499px;width:73px;height:27px;background:#003f88;color:#fff"><b class="t w cj"><span><i>瑞典超</i></span></b></div><div style="left:75px;top:499px;width:76px;height:27px;background:#efefef;color:#444"><b class="t bd"><span>25-06-28</span></b></div><div style="left:152px;top:499px;width:73px;height:27px;background:#efefef;color:#444"><b class="t bd cj"><span><span style="color:#008000"><i>哈馬比</i></span></span></b></div><div style="left:226px;top:499px;width:88px;height:27px;background:#efefef;color:#444"><b class="t bd"><span><span style="color:#f00">2-0</span>(1-0)</span></b></div><div style="left:315px;top:499px;width:39px;height:27px;background:#efefef;color:#444"><b class="t bd"><span>7-2</span></b></div><div style="left:355px;top:499px;width:73px;height:27px;background:#efefef;color:#444"><b class="t bd cj"><span><i>咸史泰斯</i></span></b></div><div style="left:429px;top:499px;width:41px;height:27px;background:#fdf9f6;color:#444"><b class="t bd"><span>1.00</span></b></div><div style="left:471px;top:499px;width:67px;height:27px;background:#fdf9f6;color:#444"><b class="t bd"><span><i>球半</i><s>/</s><i>两</i></span></b></div><div style="left:539px;top:499px;width:42px;height:27px;background:#fdf9f6;color:#444"><b class="t bd"><span>0.89</span></b></div><div style="left:582px;top:499px;width:57px;height:27px;background:#eff6fb;color:#444"><b class="t bd"><span>1.26</span></b></div><div style="left:640px;top:499px;width:57px;height:27px;background:#eff6fb;color:#444"><b class="t bd"><span>5.55</span></b></div><div style="left:698px;top:499px;width:74px;height:27px;background:#eff6fb;color:#444"><b class="t bd"><span>9.64</span></b></div><div style="left:773px;top:499px;width:38px;height:27px;background:#efefef;color:#444"><b class="t bd cj"><span><span style="color:#f00"><i>勝</i></span></span></b></div><div style="left:812px;top:499px;width:39px;height:27px;background:#efefef;color:#444"><b class="t bd cj"><span><span style="color:#f00"><i>贏</i></span></span></b></div><div style="left:852px;top:499px;width:56px;height:27px;background:#efefef;color:#444"><b class="t bd cj"><span><span style="color:#008000"><i>小</i></span></span></b></div><div style="left:0px;top:526px;width:908px;height:1px;background:#bcbcbc"></div><div style="left:1px;top:527px;width:73px;height:27px;background:#00a59f;color:#fff"><b class="t w cj"><span><i>球會友誼</i></span></b></div><div style="left:75px;top:527px;width:76px;height:27px;background:#fff;color:#444"><b class="t bd"><span>25-06-19</span></b></div><div style="left:152px;top:527px;width:73px;height:27px;background:#fff;color:#444"><b class="t bd cj"><span><span style="color:#008000"><i>哈馬比</i></span></span></b></div><div style="left:226px;top:527px;width:88px;height:27px;background:#fff;color:#444"><b class="t bd"><span><span style="color:#f00">8-3</span>(4-0)</span></b></div><div style="left:315px;top:527px;width:39px;height:27px;background:#fff;color:#444"><b class="t bd"><span></span></b></div><div style="left:355px;top:527px;width:73px;height:27px;background:#fff;color:#444"><b class="t bd cj"><span><i>哈寧厄</i></span></b></div><div style="left:429px;top:527px;width:41px;height:27px;background:#fdf9f6;color:#444"><b class="t bd"><span></span></b></div><div style="left:471px;top:527px;width:67px;height:27px;background:#fdf9f6;color:#444"><b class="t bd"><span></span></b></div><div style="left:539px;top:527px;width:42px;height:27px;background:#fdf9f6;color:#444"><b class="t bd"><span></span></b></div><div style="left:582px;top:527px;width:57px;height:27px;background:#eff6fb;color:#444"><b class="t bd"><span>1.15</span></b></div><div style="left:640px;top:527px;width:57px;height:27px;background:#eff6fb;color:#444"><b class="t bd"><span>6.97</span></b></div><div style="left:698px;top:527px;width:74px;height:27px;background:#eff6fb;color:#444"><b class="t bd"><span>12.60</span></b></div><div style="left:773px;top:527px;width:38px;height:27px;background:#fff;color:#444"><b class="t bd cj"><span><span style="color:#f00"><i>勝</i></span></span></b></div><div style="left:812px;top:527px;width:39px;height:27px;background:#fff;color:#444"><b class="t bd"><span></span></b></div><div style="left:852px;top:527px;width:56px;height:27px;background:#fff;color:#444"><b class="t bd"><span></span></b></div><div style="left:0px;top:554px;width:908px;height:1px;background:#bcbcbc"></div><div style="left:1px;top:555px;width:73px;height:27px;background:#003f88;color:#fff"><b class="t w cj"><span><i>瑞典超</i></span></b></div><div style="left:75px;top:555px;width:76px;height:27px;background:#efefef;color:#444"><b class="t bd"><span>25-05-31</span></b></div><div style="left:152px;top:555px;width:73px;height:27px;background:#efefef;color:#444"><b class="t bd cj"><span><i>艾夫斯堡</i></span></b></div><div style="left:226px;top:555px;width:88px;height:27px;background:#efefef;color:#444"><b class="t bd"><span><span style="color:#f00">0-2</span>(0-0)</span></b></div><div style="left:315px;top:555px;width:39px;height:27px;background:#efefef;color:#444"><b class="t bd"><span>3-4</span></b></div><div style="left:355px;top:555px;width:73px;height:27px;background:#efefef;color:#444"><b class="t bd cj"><span><span style="color:#008000"><i>哈馬比</i></span></span></b></div><div style="left:429px;top:555px;width:41px;height:27px;background:#fdf9f6;color:#444"><b class="t bd"><span>1.09</span></b></div><div style="left:471px;top:555px;width:67px;height:27px;background:#fdf9f6;color:#444"><b class="t bd"><span><i>平</i><s>/</s><i>半</i></span></b></div><div style="left:539px;top:555px;width:42px;height:27px;background:#fdf9f6;color:#444"><b class="t bd"><span>0.80</span></b></div><div style="left:582px;top:555px;width:57px;height:27px;background:#eff6fb;color:#444"><b class="t bd"><span>2.40</span></b></div><div style="left:640px;top:555px;width:57px;height:27px;background:#eff6fb;color:#444"><b class="t bd"><span>3.45</span></b></div><div style="left:698px;top:555px;width:74px;height:27px;background:#eff6fb;color:#444"><b class="t bd"><span>2.72</span></b></div><div style="left:773px;top:555px;width:38px;height:27px;background:#efefef;color:#444"><b class="t bd cj"><span><span style="color:#f00"><i>勝</i></span></span></b></div><div style="left:812px;top:555px;width:39px;height:27px;background:#efefef;color:#444"><b class="t bd cj"><span><span style="color:#f00"><i>贏</i></span></span></b></div><div style="left:852px;top:555px;width:56px;height:27px;background:#efefef;color:#444"><b class="t bd cj"><span><span style="color:#008000"><i>小</i></span></span></b></div><div style="left:0px;top:582px;width:908px;height:1px;background:#bcbcbc"></div><div style="left:1px;top:583px;width:73px;height:27px;background:#003f88;color:#fff"><b class="t w cj"><span><i>瑞典超</i></span></b></div><div style="left:75px;top:583px;width:76px;height:27px;background:#fff;color:#444"><b class="t bd"><span>25-05-27</span></b></div><div style="left:152px;top:583px;width:73px;height:27px;background:#fff;color:#444"><b class="t bd cj"><span><span style="color:#008000"><i>哈馬比</i></span></span></b></div><div style="left:226px;top:583px;width:88px;height:27px;background:#fff;color:#444"><b class="t bd"><span><span style="color:#f00">1-0</span>(0-0)</span></b></div><div style="left:315px;top:583px;width:39px;height:27px;background:#fff;color:#444"><b class="t bd"><span>4-2</span></b></div><div style="left:355px;top:583px;width:73px;height:27px;background:#fff;color:#444"><b class="t bd cj"><span><i>迪加科斯</i></span></b></div><div style="left:429px;top:583px;width:41px;height:27px;background:#fdf9f6;color:#444"><b class="t bd"><span>0.82</span></b></div><div style="left:471px;top:583px;width:67px;height:27px;background:#fdf9f6;color:#444"><b class="t bd"><span><i>一</i><s>/</s><i>球半</i></span></b></div><div style="left:539px;top:583px;width:42px;height:27px;background:#fdf9f6;color:#444"><b class="t bd"><span>1.07</span></b></div><div style="left:582px;top:583px;width:57px;height:27px;background:#eff6fb;color:#444"><b class="t bd"><span>1.37</span></b></div><div style="left:640px;top:583px;width:57px;height:27px;background:#eff6fb;color:#444"><b class="t bd"><span>4.92</span></b></div><div style="left:698px;top:583px;width:74px;height:27px;background:#eff6fb;color:#444"><b class="t bd"><span>7.11</span></b></div><div style="left:773px;top:583px;width:38px;height:27px;background:#fff;color:#444"><b class="t bd cj"><span><span style="color:#f00"><i>勝</i></span></span></b></div><div style="left:812px;top:583px;width:39px;height:27px;background:#fff;color:#444"><b class="t bd cj"><span><span style="color:#008000"><i>輸</i></span></span></b></div><div style="left:852px;top:583px;width:56px;height:27px;background:#fff;color:#444"><b class="t bd cj"><span><span style="color:#008000"><i>小</i></span></span></b></div><div style="left:0px;top:610px;width:908px;height:1px;background:#bcbcbc"></div><div style="left:1px;top:611px;width:73px;height:27px;background:#003f88;color:#fff"><b class="t w cj"><span><i>瑞典超</i></span></b></div><div style="left:75px;top:611px;width:76px;height:27px;background:#efefef;color:#444"><b class="t bd"><span>25-05-23</span></b></div><div style="left:152px;top:611px;width:73px;height:27px;background:#efefef;color:#444"><b class="t bd cj"><span><span style="color:#008000"><i>哈馬比</i></span></span></b></div><div style="left:226px;top:611px;width:88px;height:27px;background:#efefef;color:#444"><b class="t bd"><span><span style="color:#f00">1-2</span>(1-1)</span></b></div><div style="left:315px;top:611px;width:39px;height:27px;background:#efefef;color:#444"><b class="t bd"><span>10-3</span></b></div><div style="left:355px;top:611px;width:73px;height:27px;background:#efefef;color:#444"><b class="t bd cj"><span><i>米贊比</i></span></b></div><div style="left:429px;top:611px;width:41px;height:27px;background:#fdf9f6;color:#444"><b class="t bd"><span>0.90</span></b></div><div style="left:471px;top:611px;width:67px;height:27px;background:#fdf9f6;color:#444"><b class="t bd"><span><i>半</i><s>/</s><i>一</i></span></b></div><div style="left:539px;top:611px;width:42px;height:27px;background:#fdf9f6;color:#444"><b class="t bd"><span>0.99</span></b></div><div style="left:582px;top:611px;width:57px;height:27px;background:#eff6fb;color:#444"><b class="t bd"><span>1.67</span></b></div><div style="left:640px;top:611px;width:57px;height:27px;background:#eff6fb;color:#444"><b class="t bd"><span>3.94</span></b></div><div style="left:698px;top:611px;width:74px;height:27px;background:#eff6fb;color:#444"><b class="t bd"><span>4.53</span></b></div><div style="left:773px;top:611px;width:38px;height:27px;background:#efefef;color:#444"><b class="t bd cj"><span><span style="color:#008000"><i>負</i></span></span></b></div><div style="left:812px;top:611px;width:39px;height:27px;background:#efefef;color:#444"><b class="t bd cj"><span><span style="color:#008000"><i>輸</i></span></span></b></div><div style="left:852px;top:611px;width:56px;height:27px;background:#efefef;color:#444"><b class="t bd cj"><span><span style="color:#f00"><i>大</i></span></span></b></div><div style="left:0px;top:638px;width:908px;height:1px;background:#bcbcbc"></div><div style="left:1px;top:639px;width:73px;height:27px;background:#003f88;color:#fff"><b class="t w cj"><span><i>瑞典超</i></span></b></div><div style="left:75px;top:639px;width:76px;height:27px;background:#fff;color:#444"><b class="t bd"><span>25-05-18</span></b></div><div style="left:152px;top:639px;width:73px;height:27px;background:#fff;color:#444"><b class="t bd"><span>AIK<i>蘇納</i></span></b></div><div style="left:226px;top:639px;width:88px;height:27px;background:#fff;color:#444"><b class="t bd"><span><span style="color:#f00">0-0</span>(0-0)</span></b></div><div style="left:315px;top:639px;width:39px;height:27px;background:#fff;color:#444"><b class="t bd"><span>7-4</span></b></div><div style="left:355px;top:639px;width:73px;height:27px;background:#fff;color:#444"><b class="t bd cj"><span><span style="color:#008000"><i>哈馬比</i></span></span></b></div><div style="left:429px;top:639px;width:41px;height:27px;background:#fdf9f6;color:#444"><b class="t bd"><span>0.87</span></b></div><div style="left:471px;top:639px;width:67px;height:27px;background:#fdf9f6;color:#444"><b class="t bd"><span><span style="color:#f00"><u>*</u></span><i>平</i><s>/</s><i>半</i></span></b></div><div style="left:539px;top:639px;width:42px;height:27px;background:#fdf9f6;color:#444"><b class="t bd"><span>1.02</span></b></div><div style="left:582px;top:639px;width:57px;height:27px;background:#eff6fb;color:#444"><b class="t bd"><span>3.08</span></b></div><div style="left:640px;top:639px;width:57px;height:27px;background:#eff6fb;color:#444"><b class="t bd"><span>3.02</span></b></div><div style="left:698px;top:639px;width:74px;height:27px;background:#eff6fb;color:#444"><b class="t bd"><span>2.38</span></b></div><div style="left:773px;top:639px;width:38px;height:27px;background:#fff;color:#444"><b class="t bd cj"><span><span style="color:#00f"><i>平</i></span></span></b></div><div style="left:812px;top:639px;width:39px;height:27px;background:#fff;color:#444"><b class="t bd cj"><span><span style="color:#008000"><i>輸</i></span></span></b></div><div style="left:852px;top:639px;width:56px;height:27px;background:#fff;color:#444"><b class="t bd cj"><span><span style="color:#008000"><i>小</i></span></span></b></div><div style="left:0px;top:666px;width:908px;height:1px;background:#bcbcbc"></div><div style="left:1px;top:667px;width:73px;height:27px;background:#003f88;color:#fff"><b class="t w cj"><span><i>瑞典超</i></span></b></div><div style="left:75px;top:667px;width:76px;height:27px;background:#efefef;color:#444"><b class="t bd"><span>25-05-15</span></b></div><div style="left:152px;top:667px;width:73px;height:27px;background:#efefef;color:#444"><b class="t bd cj"><span><span style="color:#008000"><i>哈馬比</i></span></span></b></div><div style="left:226px;top:667px;width:88px;height:27px;background:#efefef;color:#444"><b class="t bd"><span><span style="color:#f00">3-2</span>(1-1)</span></b></div><div style="left:315px;top:667px;width:39px;height:27px;background:#efefef;color:#444"><b class="t bd"><span>10-3</span></b></div><div style="left:355px;top:667px;width:73px;height:27px;background:#efefef;color:#444"><b class="t bd cj"><span><i>天狼星</i></span></b></div><div style="left:429px;top:667px;width:41px;height:27px;background:#fdf9f6;color:#444"><b class="t bd"><span>0.98</span></b></div><div style="left:471px;top:667px;width:67px;height:27px;background:#fdf9f6;color:#444"><b class="t bd"><span><i>半</i><s>/</s><i>一</i></span></b></div><div style="left:539px;top:667px;width:42px;height:27px;background:#fdf9f6;color:#444"><b class="t bd"><span>0.91</span></b></div><div style="left:582px;top:667px;width:57px;height:27px;background:#eff6fb;color:#444"><b class="t bd"><span>1.57</span></b></div><div style="left:640px;top:667px;width:57px;height:27px;background:#eff6fb;color:#444"><b class="t bd"><span>4.20</span></b></div><div style="left:698px;top:667px;width:74px;height:27px;background:#eff6fb;color:#444"><b class="t bd"><span>5.14</span></b></div><div style="left:773px;top:667px;width:38px;height:27px;background:#efefef;color:#444"><b class="t bd cj"><span><span style="color:#f00"><i>勝</i></span></span></b></div><div style="left:812px;top:667px;width:39px;height:27px;background:#efefef;color:#444"><b class="t bd cj"><span><span style="color:#f00"><i>贏</i></span></span></b></div><div style="left:852px;top:667px;width:56px;height:27px;background:#efefef;color:#444"><b class="t bd cj"><span><span style="color:#f00"><i>大</i></span></span></b></div><div style="left:0px;top:694px;width:908px;height:1px;background:#bcbcbc"></div><div style="left:1px;top:695px;width:73px;height:27px;background:#003f88;color:#fff"><b class="t w cj"><span><i>瑞典超</i></span></b></div><div style="left:75px;top:695px;width:76px;height:27px;background:#fff;color:#444"><b class="t bd"><span>25-05-11</span></b></div><div style="left:152px;top:695px;width:73px;height:27px;background:#fff;color:#444"><b class="t bd cj"><span><span style="color:#008000"><i>哈馬比</i></span></span></b></div><div style="left:226px;top:695px;width:88px;height:27px;background:#fff;color:#444"><b class="t bd"><span><span style="color:#f00">1-1</span>(1-1)</span></b></div><div style="left:315px;top:695px;width:39px;height:27px;background:#fff;color:#444"><b class="t bd"><span>7-2</span></b></div><div style="left:355px;top:695px;width:73px;height:27px;background:#fff;color:#444"><b class="t bd cj"><span><i>諾高平</i></span></b></div><div style="left:429px;top:695px;width:41px;height:27px;background:#fdf9f6;color:#444"><b class="t bd"><span>1.02</span></b></div><div style="left:471px;top:695px;width:67px;height:27px;background:#fdf9f6;color:#444"><b class="t bd"><span><i>一</i><s>/</s><i>球半</i></span></b></div><div style="left:539px;top:695px;width:42px;height:27px;background:#fdf9f6;color:#444"><b class="t bd"><span>0.87</span></b></div><div style="left:582px;top:695px;width:57px;height:27px;background:#eff6fb;color:#444"><b class="t bd"><span>1.46</span></b></div><div style="left:640px;top:695px;width:57px;height:27px;background:#eff6fb;color:#444"><b class="t bd"><span>4.54</span></b></div><div style="left:698px;top:695px;width:74px;height:27px;background:#eff6fb;color:#444"><b class="t bd"><span>5.91</span></b></div><div style="left:773px;top:695px;width:38px;height:27px;background:#fff;color:#444"><b class="t bd cj"><span><span style="color:#00f"><i>平</i></span></span></b></div><div style="left:812px;top:695px;width:39px;height:27px;background:#fff;color:#444"><b class="t bd cj"><span><span style="color:#008000"><i>輸</i></span></span></b></div><div style="left:852px;top:695px;width:56px;height:27px;background:#fff;color:#444"><b class="t bd cj"><span><span style="color:#008000"><i>小</i></span></span></b></div><div style="left:0px;top:722px;width:908px;height:1px;background:#bcbcbc"></div><div style="left:1px;top:723px;width:73px;height:27px;background:#003f88;color:#fff"><b class="t w cj"><span><i>瑞典超</i></span></b></div><div style="left:75px;top:723px;width:76px;height:27px;background:#efefef;color:#444"><b class="t bd"><span>25-05-04</span></b></div><div style="left:152px;top:723px;width:73px;height:27px;background:#efefef;color:#444"><b class="t bd cj"><span><i>奧斯達</i></span></b></div><div style="left:226px;top:723px;width:88px;height:27px;background:#efefef;color:#444"><b class="t bd"><span><span style="color:#f00">0-3</span>(0-3)</span></b></div><div style="left:315px;top:723px;width:39px;height:27px;background:#efefef;color:#444"><b class="t bd"><span>3-8</span></b></div><div style="left:355px;top:723px;width:73px;height:27px;background:#efefef;color:#444"><b class="t bd cj"><span><span style="color:#008000"><i>哈馬比</i></span></span></b></div><div style="left:429px;top:723px;width:41px;height:27px;background:#fdf9f6;color:#444"><b class="t bd"><span>1.07</span></b></div><div style="left:471px;top:723px;width:67px;height:27px;background:#fdf9f6;color:#444"><b class="t bd"><span><span style="color:#f00"><u>*</u></span><i>一球</i></span></b></div><div style="left:539px;top:723px;width:42px;height:27px;background:#fdf9f6;color:#444"><b class="t bd"><span>0.82</span></b></div><div style="left:582px;top:723px;width:57px;height:27px;background:#eff6fb;color:#444"><b class="t bd"><span>5.90</span></b></div><div style="left:640px;top:723px;width:57px;height:27px;background:#eff6fb;color:#444"><b class="t bd"><span>4.26</span></b></div><div style="left:698px;top:723px;width:74px;height:27px;background:#eff6fb;color:#444"><b class="t bd"><span>1.49</span></b></div><div style="left:773px;top:723px;width:38px;height:27px;background:#efefef;color:#444"><b class="t bd cj"><span><span style="color:#f00"><i>勝</i></span></span></b></div><div style="left:812px;top:723px;width:39px;height:27px;background:#efefef;color:#444"><b class="t bd cj"><span><span style="color:#f00"><i>贏</i></span></span></b></div><div style="left:852px;top:723px;width:56px;height:27px;background:#efefef;color:#444"><b class="t bd cj"><span><span style="color:#f00"><i>大</i></span></span></b></div><div style="left:0px;top:750px;width:908px;height:1px;background:#bcbcbc"></div><div style="left:0px;top:429px;width:908px;height:1px;background:#bcbcbc"></div><div style="left:428px;top:452px;width:480px;height:1px;background:#bcbcbc"></div><div style="left:0px;top:470px;width:908px;height:1px;background:#bcbcbc"></div><div style="left:0px;top:429px;width:1px;height:321px;background:#bcbcbc"></div><div style="left:74px;top:429px;width:1px;height:321px;background:#bcbcbc"></div><div style="left:151px;top:429px;width:1px;height:321px;background:#bcbcbc"></div><div style="left:225px;top:429px;width:1px;height:321px;background:#bcbcbc"></div><div style="left:314px;top:429px;width:1px;height:321px;background:#bcbcbc"></div><div style="left:354px;top:429px;width:1px;height:321px;background:#bcbcbc"></div><div style="left:428px;top:429px;width:1px;height:321px;background:#bcbcbc"></div><div style="left:470px;top:452px;width:1px;height:298px;background:#bcbcbc"></div><div style="left:538px;top:452px;width:1px;height:298px;background:#bcbcbc"></div><div style="left:581px;top:429px;width:1px;height:321px;background:#bcbcbc"></div><div style="left:639px;top:452px;width:1px;height:298px;background:#bcbcbc"></div><div style="left:697px;top:452px;width:1px;height:298px;background:#bcbcbc"></div><div style="left:772px;top:429px;width:1px;height:321px;background:#bcbcbc"></div><div style="left:811px;top:452px;width:1px;height:298px;background:#bcbcbc"></div><div style="left:851px;top:452px;width:1px;height:298px;background:#bcbcbc"></div>
</body></html>
